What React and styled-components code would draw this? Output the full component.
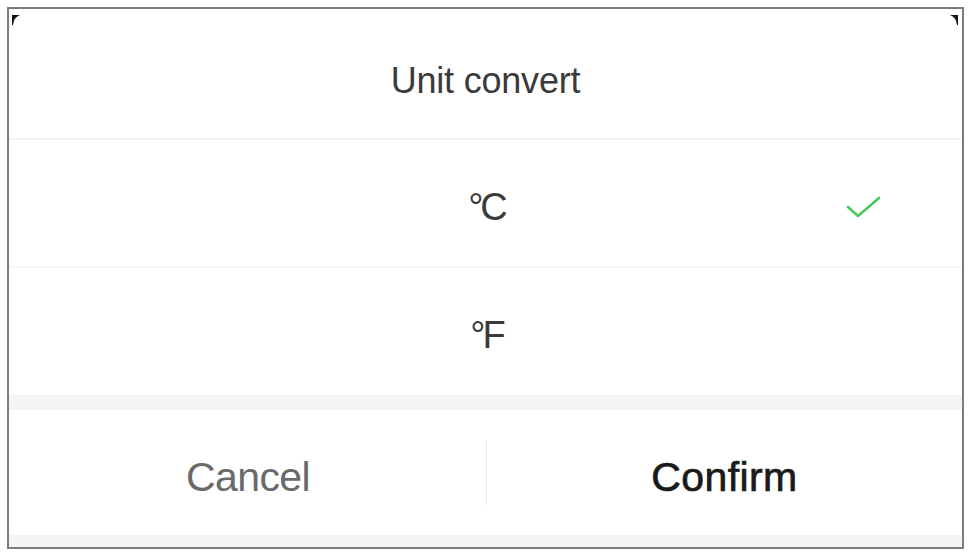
import React from "react";
import styled, { createGlobalStyle } from "styled-components";

const Global = createGlobalStyle`
  html, body { margin: 0; padding: 0; background: #ffffff; }
  body { font-family: "Liberation Sans", Arial, sans-serif; }
  #root { width: 968px; height: 553px; }
`;

const Frame = styled.div`
  box-sizing: border-box;
  position: relative;
  margin: 7px 0 0 7px;
  width: 957px;
  height: 542px;
  border: 2px solid #7c7c7c;
  background: #ffffff;
  display: flex;
  flex-direction: column;
`;

const Corner = styled.svg`
  position: absolute;
  top: 6px;
  ${(p) => (p.$side === "left" ? "left: 3px;" : "right: 4px;")}
  width: 8px;
  height: 10px;
`;

const Title = styled.div`
  height: 131px;
  box-sizing: border-box;
  border-bottom: 2px solid #f3f3f3;
  display: flex;
  align-items: center;
  justify-content: center;
  font-size: 36px;
  color: #3a3a3a;
  letter-spacing: -0.2px;
  padding-top: 14px;
`;

const Option = styled.div`
  position: relative;
  height: ${(p) => p.$h}px;
  box-sizing: border-box;
  border-bottom: ${(p) => (p.$last ? "none" : "2px solid #f5f5f5")};
  display: flex;
  align-items: center;
  justify-content: center;
  font-size: 38px;
  color: #3a3a3a;
  letter-spacing: -3px;
  padding-left: 2px;
  padding-top: 8px;
`;

const Check = styled.svg`
  position: absolute;
  right: 80px;
  top: 50%;
  margin-top: -9px;
  width: 36px;
  height: 26px;
`;

const Band = styled.div`
  height: ${(p) => p.$h}px;
  background: #f4f4f4;
`;

const Buttons = styled.div`
  height: 125px;
  display: grid;
  grid-template-columns: 478px 1fr;
  align-items: center;
`;

const Btn = styled.div`
  height: 100%;
  display: flex;
  align-items: center;
  justify-content: center;
  font-size: 41px;
  letter-spacing: ${(p) => (p.$primary ? "0.4px" : "-0.6px")};
  color: ${(p) => (p.$primary ? "#1a1a1a" : "#6a6a6a")};
  -webkit-text-stroke: ${(p) => (p.$primary ? "0.7px #1a1a1a" : "0")};
  padding-top: 10px;
  box-sizing: border-box;
  position: relative;
  ${(p) =>
    p.$divider
      ? `&::after { content: ""; position: absolute; right: 0; top: 30px; bottom: 30px; width: 1px; background: #ececec; }`
      : ""}
`;

export default function App() {
  return (
    <>
      <Global />
      <Frame>
        <Corner $side="left" viewBox="0 0 8 10">
          <path d="M0 0 L8 0 Q2 2 1 10 L0 10 Z" fill="#151515" />
        </Corner>
        <Corner $side="right" viewBox="0 0 8 10">
          <path d="M8 0 L0 0 Q6 2 7 10 L8 10 Z" fill="#151515" />
        </Corner>
        <Title>Unit convert</Title>
        <Option $h={128}>
          °C
          <Check viewBox="0 0 36 26">
            <path d="M2 13 L12 22 L33 4" fill="none" stroke="#4cc95e" strokeWidth="2.6" strokeLinecap="round" strokeLinejoin="round" />
          </Check>
        </Option>
        <Option $h={127} $last>
          °F
        </Option>
        <Band $h={15} />
        <Buttons>
          <Btn $divider>Cancel</Btn>
          <Btn $primary>Confirm</Btn>
        </Buttons>
        <Band $h={12} />
      </Frame>
    </>
  );
}
